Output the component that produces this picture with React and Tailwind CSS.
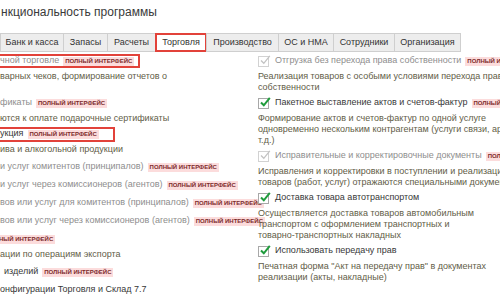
import React from "react";

const tabs = [
  { label: "Банк и касса", w: "w-[64px]" },
  { label: "Запасы", w: "w-[45px]" },
  { label: "Расчеты", w: "w-[49px]" },
  { label: "Торговля", w: "w-[52px]", active: true },
  { label: "Производство", w: "w-[73px]" },
  { label: "ОС и НМА", w: "w-[56px]" },
  { label: "Сотрудники", w: "w-[62px]" },
  { label: "Организация", w: "w-[67px]" },
];

const options = [
  {
    title: "Отгрузка без перехода права собственности",
    badge: true,
    lines: ["Реализация товаров с особыми условиями перехода прав", "собственности"],
  },
  {
    on: true,
    title: "Пакетное выставление актов и счетов-фактур",
    badge: true,
    lines: [
      "Формирование актов и счетов-фактур по одной услуге",
      "одновременно нескольким контрагентам (услуги связи, аренды и",
      "т.д.)",
    ],
  },
  {
    title: "Исправительные и корректировочные документы",
    badge: true,
    lines: [
      "Исправления и корректировки в поступлении и реализации",
      "товаров (работ, услуг) отражаются специальными документами",
    ],
  },
  {
    on: true,
    title: "Доставка товара автотранспортом",
    lines: [
      "Осуществляется доставка товаров автомобильным",
      "транспортом с оформлением транспортных и",
      "товарно-транспортных накладных",
    ],
  },
  {
    on: true,
    title: "Использовать передачу прав",
    lines: ['Печатная форма "Акт на передачу прав" в документах', "реализации (акты, накладные)"],
  },
];

const Badge = ({ className = "" }) => (
  <span className={`inline-block shrink-0 whitespace-nowrap bg-[#fcdcdc] px-[2px] text-[6px] font-bold leading-[9px] text-[#7d2a2a] ${className}`}>
    ПОЛНЫЙ ИНТЕРФЕЙС
  </span>
);

const Check = ({ on }) => (
  <span className="relative mr-[5px] inline-block h-[12px] w-[12px] shrink-0">
    <span className={`absolute left-0 top-[1px] h-[11px] w-[11px] border bg-white ${on ? "border-[#a8a8a8]" : "border-[#d2d2d2]"}`} />
    <svg className="absolute left-[1px] top-[-1px]" width="12" height="12" viewBox="0 0 12 12">
      <path d="M2 6.5 L4.8 9.3 L10.8 1.8" fill="none" stroke={on ? "#1f9c3c" : "#c3c3c3"} strokeWidth={on ? 2 : 1.3} />
    </svg>
  </span>
);

// левая колонка обрезана краем окна — видны только концы строк
const Row = ({ children, dim, className = "" }) => (
  <div className={`flex h-[18px] items-center whitespace-nowrap ${dim ? "text-[#8e8e8e]" : "text-[#383838]"} ${className}`}>
    {children}
  </div>
);

const Desc = ({ children, className = "mb-[1px]" }) => (
  <div className={`mt-[1px] whitespace-nowrap leading-[11px] text-[#625d47] ${className}`}>{children}</div>
);

const Option = ({ on, title, badge, lines }) => (
  <div className="mb-[1px]">
    <div className={`flex h-[18px] items-center whitespace-nowrap ${on ? "text-[#383838]" : "text-[#8e8e8e]"}`}>
      <Check on={on} />
      <span>{title}</span>
      {badge && <Badge className="ml-[4px]" />}
    </div>
    <div className="mt-[1px] whitespace-nowrap leading-[11px] text-[#625d47]">
      {lines.map((l) => (
        <div key={l}>{l}</div>
      ))}
    </div>
  </div>
);

export default function App() {
  return (
    <div className="h-[300px] w-[500px] overflow-hidden bg-white font-['Liberation_Sans',Arial,sans-serif] text-[9px]">
      <h1 className="pl-[1px] pt-[4px] text-[12px] leading-[16px] text-[#3a3a3a]">нкциональность программы</h1>

      <div className="mt-[13px] flex h-[19px]">
        {tabs.map((t) =>
          t.active ? (
            <div key={t.label} className={`${t.w} -ml-px flex items-center justify-center border-2 border-[#e2423a] bg-white text-[#333]`}>
              {t.label}
            </div>
          ) : (
            <div key={t.label} className={`${t.w} -ml-px flex items-center justify-center border border-[#cfcfcf] bg-[#ededed] text-[#333] first:ml-0`}>
              {t.label}
            </div>
          )
        )}
      </div>

      <div className="flex">
        <div className="w-[258px] shrink-0">
          <Row dim>
            <span className="flex h-[14px] items-center border-y-2 border-r-2 border-[#e2423a] pr-[4px]">
              <span>чной торговле</span>
              <Badge className="ml-[4px]" />
            </span>
          </Row>
          <Desc>
            варных чеков, формирование отчетов о
            <br />
            &nbsp;
          </Desc>
          <Row dim>
            <span>фикаты</span>
            <Badge className="ml-[4px]" />
          </Row>
          <Desc>ются к оплате подарочные сертификаты</Desc>
          <Row>
            <span className="flex h-[15px] items-center border-y-2 border-r-2 border-[#e2423a] pr-[14px]">
              <span>укция</span>
              <Badge className="ml-[4px]" />
            </span>
          </Row>
          <Desc className="mb-[3px]">ива и алкогольной продукции</Desc>
          <Row dim>
            <span>и услуг комитентов (принципалов)</span>
            <Badge className="ml-[4px]" />
          </Row>
          <Row dim>
            <span>и услуг через комиссионеров (агентов)</span>
            <Badge className="ml-[4px]" />
          </Row>
          <Row dim>
            <span>вов или услуг для комитентов (принципалов)</span>
            <Badge className="ml-[4px]" />
          </Row>
          <Row dim>
            <span>вов или услуг через комиссионеров (агентов)</span>
            <Badge className="ml-[4px]" />
          </Row>
          <Row>
            <Badge className="-ml-[16px]" />
          </Row>
          <Desc className="mb-[3px]">ации по операциям экспорта</Desc>
          <Row className="pl-[4px]">
            <span>изделий</span>
            <Badge className="ml-[4px]" />
          </Row>
          <Row>онфигурации Торговля и Склад 7.7</Row>
        </div>

        <div className="shrink-0">
          {options.map((o) => (
            <Option key={o.title} {...o} />
          ))}
        </div>
      </div>
    </div>
  );
}
